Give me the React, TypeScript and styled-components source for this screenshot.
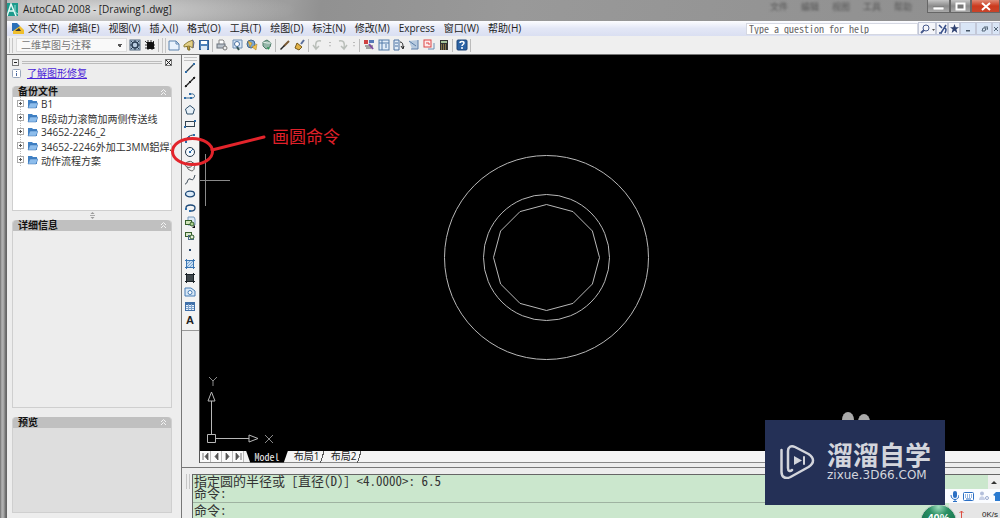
import React from "react";
import styled, { createGlobalStyle, css } from "styled-components";

const ui = `"Open Sans", "Noto Sans CJK SC", sans-serif`;
const mono = `"Noto Sans Mono CJK SC", "Liberation Mono", "Noto Sans CJK SC", monospace`;

const GlobalStyle = createGlobalStyle`
  * { box-sizing: border-box; }
  html, body { margin: 0; height: 100%; overflow: hidden; }
  body { font-family: ${ui}; font-size: 10px; color: #222; background: #ededed; }
  button { font: inherit; color: inherit; padding: 0; border: 0; background: none; }
  svg { display: block; flex: none; }
`;

const Window = styled.div`
  position: relative;
  display: flex;
  height: 100vh;
  overflow: hidden;
`;

const FrameEdge = styled.div`
  flex: 0 0 7px;
  background: linear-gradient(90deg, #6f6f6f 0, #b4b4b4 2px, #a2a2a2 4px, #777 5px, #5f5f5f 7px);
`;

const Main = styled.div`
  flex: 1;
  min-width: 0;
  display: flex;
  flex-direction: column;
`;

const TitleBar = styled.header`
  display: flex;
  align-items: flex-start;
  height: 21px;
  background:
    radial-gradient(ellipse 200px 24px at 90px 10px, rgba(225, 225, 225, 0.85), rgba(200, 200, 200, 0) 100%),
    linear-gradient(100deg, #a3a3a3 0, #9d9d9d 280px, #919191 310px, #999 500px, #8f8f8f 100%);
`;

const Title = styled.h1`
  display: flex;
  align-items: center;
  gap: 5px;
  margin: 0;
  height: 18px;
  font-size: 10px;
  font-weight: 400;
  line-height: 18px;
  color: #1c1c1c;
`;

const Ghosts = styled.div`
  display: flex;
  gap: 13px;
  margin-left: auto;
  margin-right: 15px;
  font-size: 9px;
  line-height: 13px;
  color: #555;
  filter: blur(1px);
`;

const WinButton = styled.button<{ $close?: boolean; $w: number }>`
  display: flex;
  align-items: center;
  justify-content: center;
  width: ${(p) => p.$w}px;
  height: 13px;
  border: 1px solid #666;
  border-top: 0;
  background: ${(p) =>
    p.$close ? "linear-gradient(#dd8a76, #cc3a1e 50%, #c8442a)" : "linear-gradient(#c4c4c4, #8c8c8c 50%, #a9a9a9)"};
`;

const MenuBar = styled.nav`
  display: flex;
  align-items: center;
  gap: 9px;
  height: 15px;
  padding-left: 4px;
  background: linear-gradient(#fdfdff, #e3e7f6 50%, #dadff2);
`;

const AppMark = styled.svg`
  margin-right: -6px;
`;

const MenuItem = styled.button`
  line-height: 15px;
  white-space: nowrap;
`;

const Help = styled.div`
  display: flex;
  align-items: center;
  margin-left: auto;
  height: 13px;
`;

const HelpInput = styled.input`
  width: 172px;
  height: 12px;
  padding: 0 2px;
  border: 1px solid #d5d8e2;
  font: 10px/10px ${mono};
  color: #555;
  background: #fff;
  &::placeholder { color: #666; opacity: 1; }
`;

const HelpButton = styled.button<{ $w: number; $pane?: boolean }>`
  display: flex;
  align-items: center;
  justify-content: center;
  width: ${(p) => p.$w}px;
  height: 13px;
  border: 1px solid #c3c8d8;
  background: ${(p) => (p.$pane ? "#d9e5f6" : "#f4f5fa")};
`;

const ToolBar = styled.div`
  display: flex;
  align-items: center;
  height: 19px;
  padding-left: 2px;
  background: #efefef;
  border-bottom: 1px solid #777;
`;

const Grip = styled.i<{ $across?: boolean }>`
  flex: none;
  ${(p) =>
    p.$across
      ? css`height: 4px; margin: 2px 2px 0; border: solid #c2c2c2; border-width: 1px 0;`
      : css`width: 4px; height: 15px; border: solid #c6c6c6; border-width: 0 1px;`}
`;

const Workspace = styled.select`
  appearance: none;
  width: 111px;
  height: 14px;
  margin: 0 0 0 3px;
  padding: 0 4px;
  border: 1px solid #dcdcdc;
  font: 10px/12px ${ui};
  color: #777;
  background:
    linear-gradient(45deg, transparent 50%, #555 50%) right 6px center / 3px 3px no-repeat,
    linear-gradient(315deg, transparent 50%, #555 50%) right 3px center / 3px 3px no-repeat,
    #f9f9f9;
`;

const ToolButton = styled.button<{ $w?: number }>`
  display: flex;
  align-items: center;
  justify-content: center;
  flex: none;
  width: ${(p) => p.$w ?? 15}px;
  height: 14px;
`;

const LetterA = styled.span`
  font: 700 11px/14px "Liberation Sans", sans-serif;
  color: #222;
`;

const Separator = styled.i`
  flex: none;
  width: 1px;
  height: 13px;
  margin: 0 1px;
  background: #bbb;
`;

const Standard = styled.div`
  display: flex;
  align-items: center;
  margin-left: 2px;
`;

const Body = styled.div`
  flex: 1;
  min-height: 0;
  display: flex;
`;

const Palette = styled.aside`
  flex: 0 0 175px;
  min-width: 0;
  display: flex;
  flex-direction: column;
  padding: 2px 9px 5px 5px;
  border-right: 1px solid #777;
  background: #ededed;
`;

const PaletteTop = styled.div`
  display: flex;
  align-items: center;
  gap: 3px;
  height: 10px;
`;

const PaletteRule = styled.i`
  flex: 1;
  height: 3px;
  border: solid #bcbcbc;
  border-width: 1px 0;
`;

const SmallBox = styled.button`
  display: flex;
  align-items: center;
  justify-content: center;
  width: 7px;
  height: 7px;
  border: 1px solid #777;
  background: #f4f4f4;
`;

const LearnRow = styled.div`
  display: flex;
  align-items: center;
  gap: 6px;
  height: 13px;
  margin-bottom: 6px;
  a { color: #4a24d8; font-size: 10px; line-height: 13px; }
`;

const Group = styled.section<{ $grow: number; $shade?: boolean }>`
  flex: ${(p) => p.$grow} 1 0;
  min-height: 0;
  display: flex;
  flex-direction: column;
  border: 1px solid #cfcfcf;
  border-top: 0;
  border-radius: 4px 4px 0 0;
  background: ${(p) => (p.$shade ? "#dedede" : "#ededed")};
`;

const GroupHead = styled.h2`
  display: flex;
  align-items: center;
  justify-content: space-between;
  flex: none;
  height: 11px;
  margin: 0;
  padding: 0 4px 0 5px;
  border-radius: 4px 4px 0 0;
  font-size: 10px;
  font-weight: 700;
  line-height: 11px;
  color: #111;
  background: #c0c0c0;
`;

const Tree = styled.ul`
  flex: 1;
  margin: 0;
  padding: 0 0 0 4px;
  list-style: none;
  overflow: hidden;
  background: #fff;
`;

const TreeItem = styled.li`
  display: flex;
  align-items: center;
  gap: 3px;
  height: 14px;
  white-space: nowrap;
  color: #333;
`;

const Splitter = styled.div`
  flex: none;
  display: flex;
  align-items: center;
  justify-content: center;
  height: 9px;
`;

const Right = styled.div`
  flex: 1;
  min-width: 0;
  display: flex;
  flex-direction: column;
`;

const Upper = styled.div`
  flex: 1;
  min-height: 0;
  display: flex;
`;

const DrawBar = styled.div`
  flex: 0 0 17px;
  align-self: flex-start;
  display: flex;
  flex-direction: column;
  padding-bottom: 3px;
  border-bottom: 1px solid #999;
  background: #f3f3f3;
`;

const View = styled.main`
  flex: 1;
  min-width: 0;
  display: flex;
  flex-direction: column;
  border-left: 1px solid #555;
`;

const Canvas = styled.svg`
  flex: 1;
  width: 100%;
  min-height: 0;
  background: #000;
`;

const Tabs = styled.div`
  display: flex;
  align-items: center;
  height: 12px;
  background: #f4f4f4;
  border-bottom: 1px solid #888;
`;

const NavButton = styled.button`
  display: flex;
  align-items: center;
  justify-content: center;
  width: 11px;
  height: 11px;
  border-right: 1px solid #bbb;
  background: #fafafa;
`;

const Tab = styled.button<{ $active?: boolean }>`
  height: 12px;
  line-height: 11px;
  ${(p) =>
    p.$active
      ? css`width: 42px; margin-left: 2px; font-family: ${mono}; color: #eee; background: #000; clip-path: polygon(0 0, 100% 0, 90% 100%, 10% 100%);`
      : css`width: 37px; background: linear-gradient(107deg, transparent 34px, #555 34px, #555 35px, transparent 35px);`}
`;

const Command = styled.section`
  flex: none;
  display: flex;
  height: 51px;
  margin-top: 4px;
  padding: 6px 0 0 4px;
  border-top: 1px solid #777;
  background: #ededed;
`;

const CommandBox = styled.div`
  flex: 1;
  display: flex;
  flex-direction: column;
  margin-left: 2px;
  border: solid #666;
  border-width: 1px 0 0 1px;
  background: #cbe7cd;
  font: 13px/12px ${mono};
  color: #333;
`;

const Log = styled.div`
  display: flex;
  justify-content: space-between;
  flex: none;
  height: 28px;
  padding-left: 1px;
  border-bottom: 1px solid #9fb3a1;
  p { margin: 0; white-space: pre; }
`;

const ScrollUp = styled.button`
  display: flex;
  align-items: center;
  justify-content: center;
  width: 12px;
  height: 14px;
  background: #eee;
`;

const Prompt = styled.label`
  display: flex;
  padding-left: 1px;
  line-height: 14px;
  input { flex: 1; min-width: 0; border: 0; padding: 0; height: 13px; background: transparent; font: inherit; outline: 0; }
`;

const Notes = styled.svg`
  position: absolute;
  inset: 0;
  width: 100%;
  height: 100%;
  pointer-events: none;
`;

const Watermark = styled.div`
  position: absolute;
  right: 55px;
  bottom: 13px;
  display: flex;
  align-items: center;
  gap: 12px;
  width: 180px;
  height: 85px;
  padding: 0 0 4px 14px;
  color: #d3d5dc;
  background: #243056;
  strong { display: block; font: 700 26px/28px "Noto Sans CJK SC", sans-serif; }
  span { display: block; font: 12px/14px "DejaVu Sans", sans-serif; }
`;

const Tray = styled.div`
  position: absolute;
  right: 0;
  bottom: 0;
  width: 81px;
  height: 29px;
`;

const ImeBar = styled.div`
  display: flex;
  align-items: center;
  justify-content: flex-end;
  gap: 4px;
  height: 14px;
  margin-left: 26px;
  background: #fafcff;
`;

const Meter = styled.div`
  display: flex;
  align-items: flex-start;
  justify-content: flex-end;
  gap: 18px;
  height: 15px;
  margin-left: 30px;
  padding: 7px 2px 0 0;
  font: 8px/10px "Liberation Sans", sans-serif;
  background: #e6e6e6;
`;

const Ball = styled.div`
  position: absolute;
  left: 1px;
  top: 15px;
  width: 37px;
  height: 37px;
  padding-top: 7px;
  border: 1px solid #c7cfc9;
  border-radius: 50%;
  font: 700 11px/12px "Liberation Sans", sans-serif;
  text-align: center;
  color: #fff;
  background: radial-gradient(circle at 50% 5%, #9fdcbc 0, #2c9165 25%, #12704a 65%);
`;

const icons: Record<string, React.ReactNode> = {
  gear: <><rect x="1" y="1" width="10" height="10" fill="#b8cbe0" stroke="#53687f" /><circle cx="6" cy="6" r="3" fill="none" stroke="#2c3f55" strokeWidth="1.5" /><path d="M6 1v2M6 9v2M1 6h2M9 6h2M2 2l2 2M8 8l2 2M10 2L8 4M4 8l-2 2" stroke="#2c3f55" /></>,
  chip: <><rect x="3" y="3" width="7" height="7" fill="#111" /><path d="M1 2l2 2M4 1v2M7 1v2M10 2L8 4M1 6h2M1 9h2M10 6h1M10 9h1M4 10v1M8 10v1" stroke="#333" /></>,
  newdoc: <><path d="M1 2h7l3 3v6H1z" fill="#e9f2fc" stroke="#5d83ae" /><path d="M8 2v3h3" fill="none" stroke="#5d83ae" /></>,
  open: <><path d="M1 6l4-3 5-2v8l-4-2-5 1z" fill="#e3cf86" stroke="#8f8038" /><path d="M4 7l1 4h2l-1-4" fill="#c9a43e" stroke="#7a6a2c" /><path d="M9 1l2 2-1 6" fill="none" stroke="#668" /></>,
  save: <><rect x="1.5" y="1.5" width="9" height="9" fill="#4d80b9" stroke="#2f5e96" /><rect x="3" y="2" width="6" height="3" fill="#fff" /><rect x="3" y="7" width="6" height="4" fill="#dce8f4" /></>,
  print: <><path d="M3 5V1h4l1 1v3" fill="#fff" stroke="#888" /><rect x="1" y="5" width="8" height="4" fill="#b9c0c8" stroke="#6a727c" /><circle cx="9" cy="9" r="2" fill="#eee" stroke="#777" /></>,
  preview: <><path d="M2 1h9v8H2z" fill="#d7e6f6" stroke="#6c8db3" /><circle cx="6" cy="5" r="2.5" fill="#fff" stroke="#4971a2" /><path d="M6 8l2 3" stroke="#355" strokeWidth="2" /></>,
  publish: <><circle cx="5" cy="5" r="4" fill="#7aa6d2" stroke="#41668d" /><path d="M2 2l4 2-2 4zM6 8l5-3-1 6z" fill="#f0c24d" stroke="#a77d1f" strokeWidth=".5" /></>,
  etransmit: <><path d="M2 3l4-2 4 3-1 4-4 2-3-3z" fill="#95b7a9" stroke="#4c7b67" /><path d="M2 3l4 1 4 0" stroke="#e6f2ec" fill="none" /><path d="M6 8l1 3 2-2" fill="#2f9b58" /></>,
  brush: <><path d="M10 2L5 7" stroke="#7a5a35" strokeWidth="2" /><path d="M5 6l1 1-4 4-1-1z" fill="#222" /></>,
  match: <><path d="M10 1L7 5" stroke="#5a6e9c" strokeWidth="2" /><path d="M3 4l5 4-3 3-4-2z" fill="#e2b246" stroke="#795b1b" /></>,
  undo: <path d="M9 2C4 1 3 4 4 9M1 6l3 4 3-3" fill="none" stroke="#b9beb9" strokeWidth="1.5" />,
  redo: <path d="M3 2c5-1 6 2 5 7M11 6l-3 4-3-3" fill="none" stroke="#b9beb9" strokeWidth="1.5" />,
  more: <path d="M5 3h2v1H5zM5 6h2l-1 2z" fill="#bbb" />,
  props: <><rect x="1" y="1" width="4" height="4" fill="#cf4141" /><rect x="6" y="1" width="5" height="3" fill="#5578b8" /><path d="M2 7h8M3 9h5" stroke="#555" /><path d="M6 5l4 5" stroke="#7e4ba0" strokeWidth="2" /></>,
  center: <><rect x="1" y="1" width="10" height="10" fill="#e2edf8" stroke="#527ba8" /><path d="M1 4h10M4 1v10M7 6h2M7 8h2" stroke="#527ba8" /></>,
  palettes: <><path d="M1 1h5v10H1z" fill="#e2edf8" stroke="#4b71a0" /><path d="M2 4h3M2 7h3" stroke="#4b71a0" /><path d="M7 3c3 0 3 3 3 6M8 7l2 3 1-3" fill="none" stroke="#222" /></>,
  sheets: <><path d="M1 2l9-1v9H4z" fill="#b7cadf" /><path d="M1 2l7 5M10 1v9H3" fill="none" stroke="#5c7fa8" /></>,
  markup: <><rect x="1" y="1" width="7" height="7" fill="#fdeaea" stroke="#d44" /><path d="M3 4h3v2" stroke="#d44" fill="none" /><path d="M5 10h6V4" fill="none" stroke="#6c8db3" /></>,
  calc: <><rect x="2" y="1" width="8" height="10" fill="#333" /><rect x="3" y="2" width="6" height="2" fill="#a7c39b" /><path d="M3 6h6M3 8h6M3 10h6" stroke="#d9b65e" strokeDasharray="1 1" /></>,
  help: <><rect x="1" y="1" width="10" height="10" rx="1" fill="#2c63a5" stroke="#1d4478" /><path d="M4 4c0-2 4-2 4 0 0 1.5-2 1.5-2 3M6 8v2" fill="none" stroke="#fff" strokeWidth="1.5" /></>,
  line: <><path d="M2 10L10 2" stroke="#33424f" strokeWidth="1.3" /><path d="M1 9h2v2H1zM9 1h2v2H9z" fill="#2d6ca8" /></>,
  xline: <><path d="M1 11L11 1" stroke="#222" strokeWidth="1.3" /><path d="M1 9h2v2H1zM5 5h2v2H5zM9 1h2v2H9z" fill="#222" /></>,
  pline: <><path d="M1 8h7c4 0 3-5-1-4" fill="none" stroke="#33658f" /><path d="M0 7h2v2H0zM6 7h2v2H6zM5 3h2v2H5z" fill="#2d6ca8" /></>,
  polygon: <path d="M6 1.5l4.500 3.500L9 10H3L1.500 5z" fill="#e8f1f8" stroke="#31506b" />,
  rect: <><rect x="1.5" y="3.5" width="9" height="5" fill="none" stroke="#33424f" /><path d="M0 8h2v2H0zM10 2h2v2h-2z" fill="#2d6ca8" /></>,
  arc: <><path d="M2 10c0-4 3-7 8-7" fill="none" stroke="#33424f" /><path d="M1 9h2v2H1zM4 4h2v2H4zM9 2h2v2H9z" fill="#2d6ca8" /></>,
  circle: <><circle cx="6" cy="6" r="4.5" fill="#f6fbff" stroke="#273a4b" /><path d="M6 6l3-3" stroke="#2d6ca8" /><path d="M5 5h2v2H5z" fill="#2d6ca8" /></>,
  cloud: <path d="M3 7C0 6 1 2 4 2c1-1 4-1 5 1 2 0 3 3 1 4 1 3-2 5-4 3-1 0-3-1-2-3M3 7c2 1 5 0 5-2" fill="none" stroke="#555" />,
  spline: <path d="M1 10c3 0 2-6 5-5s3 2 5-4" fill="none" stroke="#33424f" />,
  ellipse: <ellipse cx="6" cy="6" rx="4.500" ry="2.800" fill="#dcebf8" stroke="#1f4a78" strokeWidth="1.3" />,
  earc: <><path d="M2 6c0-4 9-4 9 0 0 2-2 3-4 3" fill="none" stroke="#1f4a78" strokeWidth="1.3" /><path d="M1 6h2v2H1zM5 8h2v2H5z" fill="#2d6ca8" /></>,
  insert: <><path d="M4 1h6l1 2v6H4z" fill="#dbe8f5" stroke="#7799bb" /><rect x="1.5" y="4.5" width="6" height="4" fill="#cfe3b8" stroke="#355f2a" /><circle cx="8" cy="8" r="2" fill="#a8cf8d" stroke="#355f2a" /><path d="M11 9v3H8z" fill="#111" /></>,
  block: <><rect x="1.5" y="2.5" width="6" height="4" fill="#d9e8c7" stroke="#355f2a" /><rect x="4.500" y="5.500" width="5" height="4" fill="none" stroke="#4a6c8b" /><circle cx="8" cy="7" r="2" fill="#e7f0da" stroke="#355f2a" /></>,
  point: <rect x="5" y="5" width="2" height="2" fill="#27466a" />,
  hatch: <><rect x="2.5" y="2.5" width="7" height="7" fill="#c9def3" /><path d="M2.5 1v10M9.5 1v10M1 2.5h10M1 9.5h10" stroke="#3a76b4" /><path d="M3 9l6-6M3 6l3-3M6 9l3-3" stroke="#7aa6d2" /></>,
  gradient: <><rect x="2" y="2" width="8" height="8" fill="#3f474b" /><path d="M2.5 1v10M9.5 1v10M1 2.5h10M1 9.5h10" stroke="#1c2328" /></>,
  region: <><path d="M1 2h6l4 3v5H1z" fill="#d8e7f6" stroke="#467db5" /><circle cx="6" cy="6.500" r="2" fill="#fff" stroke="#467db5" /></>,
  table: <><rect x="1.5" y="2.5" width="9" height="8" fill="#e8f1fb" stroke="#3f6fa8" /><path d="M1 4h10" stroke="#3f6fa8" strokeWidth="2" /><path d="M2 6.5h8M2 8.5h8M4.5 4v6M7.5 4v6" stroke="#7fa3cd" /></>,
};

const Icon = ({ name }: { name: string }) => (
  <svg width="12" height="12" viewBox="0 0 12 12" fill="none" aria-hidden="true">{icons[name]}</svg>
);

const menus = ["文件(F)", "编辑(E)", "视图(V)", "插入(I)", "格式(O)", "工具(T)", "绘图(D)", "标注(N)", "修改(M)", "Express", "窗口(W)", "帮助(H)"];
const standard = [
  ["newdoc", "open", "save"],
  ["print", "preview", "publish", "etransmit"],
  ["brush", "match"],
  ["undo", "more", "redo", "more"],
  ["props", "center", "palettes", "sheets", "markup", "calc"],
  ["help"],
];
const drawTools = ["line", "xline", "pline", "polygon", "rect", "arc", "circle", "cloud", "spline", "ellipse", "earc", "insert", "block", "point", "hatch", "gradient", "region", "table"];
const backups = ["B1", "B段动力滚筒加两侧传送线", "34652-2246_2", "34652-2246外加工3MM鋁焊2", "动作流程方案"];

const dodecagon = Array.from({ length: 12 }, (_, i) => {
  const a = (i * Math.PI) / 6;
  return `${(346.5 + 53 * Math.cos(a)).toFixed(1)},${(202.5 + 53 * Math.sin(a)).toFixed(1)}`;
}).join(" ");

const Chevrons = () => (
  <svg width="7" height="8" viewBox="0 0 7 8" fill="none" stroke="#f4f4f4"><path d="M1 4l2.5-2.5L6 4M1 7l2.5-2.5L6 7" /></svg>
);

const navShapes = ["M2 1v7M7 1L4 4.5 7 8z", "M6 1L3 4.5 6 8z", "M3 1l3 3.5L3 8z", "M2 1l3 3.5L2 8zM7 1v7"];

export default function App() {
  return (
    <Window>
      <GlobalStyle />
      <FrameEdge />
      <Main>
        <TitleBar>
          <Title>
            <svg width="11" height="13" viewBox="0 0 11 13"><rect width="11" height="13" fill="#1c9a8c" /><path d="M0 13L4 1l5 12M2 8h5" fill="none" stroke="#e4fbf6" strokeWidth="1.5" /><path d="M8 2v7l3 2" fill="none" stroke="#9be0d6" /></svg>
            AutoCAD 2008 - [Drawing1.dwg]
          </Title>
          <Ghosts aria-hidden="true"><span>文件</span><span>编辑</span><span>视图</span><span>工具</span><span>帮助</span></Ghosts>
          <WinButton $w={23} aria-label="Minimize"><svg width="11" height="8"><path d="M0 5h11v3H0z" fill="#fff" stroke="#555" strokeWidth=".5" /></svg></WinButton>
          <WinButton $w={21} aria-label="Restore"><svg width="11" height="9"><rect x="1.5" y="1.5" width="8" height="6" fill="#777" stroke="#fff" strokeWidth="2" /></svg></WinButton>
          <WinButton $w={29} $close aria-label="Close"><svg width="10" height="9"><path d="M1 1l8 7M9 1L1 8" stroke="#fff" strokeWidth="2" /></svg></WinButton>
        </TitleBar>

        <MenuBar>
          <AppMark width="14" height="13" viewBox="0 0 14 13"><path d="M1 1h5l3 3v5H1z" fill="#2a6fb8" /><path d="M2 9l7-5 4 4v4H2z" fill="#f0bf2f" /><path d="M4 9l4-3 2 3z" fill="#333" /></AppMark>
          {menus.map((m) => <MenuItem key={m}>{m}</MenuItem>)}
          <Help>
            <HelpInput aria-label="Help search" placeholder="Type a question for help" />
            <HelpButton $w={18} aria-label="Search"><svg width="15" height="10" fill="none"><circle cx="6" cy="4" r="3" stroke="#46598c" /><path d="M4 6L1 9" stroke="#46598c" strokeWidth="2" /><path d="M12 5h3l-1.5 2z" fill="#555" /></svg></HelpButton>
            <HelpButton $w={12} aria-label="Communication"><svg width="9" height="10" fill="none" stroke="#39508a"><path d="M1 1l3 3M8 1L3 9M6 4c3 0 2 3 1 5M1 9h3" strokeWidth="1.5" /></svg></HelpButton>
            <HelpButton $w={12} aria-label="Favorites"><svg width="9" height="9"><path d="M4.5 0l1.2 3.2H9L6.4 5.3 7.3 9 4.5 6.8 1.7 9l.9-3.7L0 3.2h3.3z" fill="#2f4170" /></svg></HelpButton>
            <HelpButton $w={16} $pane aria-label="Minimize drawing"><svg width="6" height="6"><path d="M1 4h4v1.5H1z" fill="#456" /></svg></HelpButton>
            <HelpButton $w={16} $pane aria-label="Restore drawing"><svg width="7" height="6" fill="none"><path d="M1 5l1-3h3l-1 3zM3 1h4L6 4" stroke="#567" /></svg></HelpButton>
            <HelpButton $w={8} $pane aria-label="Close drawing"><svg width="4" height="6"><path d="M0 1l4 4M4 1L0 5" stroke="#567" /></svg></HelpButton>
          </Help>
        </MenuBar>

        <ToolBar>
          <Grip />
          <Workspace aria-label="Workspace"><option>二维草图与注释</option></Workspace>
          <ToolButton aria-label="gear"><Icon name="gear" /></ToolButton>
          <ToolButton aria-label="chip"><Icon name="chip" /></ToolButton>
          <Separator />
          <Standard>
            <Grip />
            {standard.map((group, g) => (
              <React.Fragment key={g}>
                {g > 0 && <Separator />}
                {group.map((n, i) => <ToolButton key={n + i} $w={n === "more" ? 9 : 15} aria-label={n}><Icon name={n} /></ToolButton>)}
              </React.Fragment>
            ))}
            <Separator />
          </Standard>
        </ToolBar>

        <Body>
          <Palette>
            <PaletteTop>
              <SmallBox aria-label="Auto-hide"><svg width="3" height="1"><rect width="3" height="1" fill="#222" /></svg></SmallBox>
              <PaletteRule />
              <SmallBox aria-label="Close palette"><svg width="5" height="5"><path d="M0 0l5 5M5 0L0 5" stroke="#222" /></svg></SmallBox>
            </PaletteTop>
            <LearnRow>
              <svg width="9" height="10"><rect x=".5" y=".5" width="8" height="8" rx="1" fill="#fff" stroke="#9aa7bb" /><path d="M4.5 2v1M4.5 4v3" stroke="#4a68a0" /></svg>
              <a href="#repair">了解图形修复</a>
            </LearnRow>
            <Group $grow={125}>
              <GroupHead>备份文件 <Chevrons /></GroupHead>
              <Tree>
                {backups.map((b) => (
                  <TreeItem key={b}>
                    <svg width="7" height="14" fill="none"><path d="M3.5 0v14" stroke="#bbb" strokeDasharray="1 1" /><rect x=".5" y="3.5" width="6" height="6" fill="#fff" stroke="#aaa" /><path d="M2 6.5h3M3.5 5v3" stroke="#555" /></svg>
                    <svg width="11" height="10" viewBox="0 0 11 10"><path d="M1 1h4l1 1h4v7H1z" fill="#3f80c4" /><path d="M3 4h8L9 9H1z" fill="#8dbdec" stroke="#3a73b3" strokeWidth=".5" /></svg>
                    {b}
                  </TreeItem>
                ))}
              </Tree>
            </Group>
            <Splitter><svg width="5" height="7"><path d="M2.5 0l2 2h-4zM2.5 7l2-2h-4z" fill="#999" /><path d="M0 3.5h5" stroke="#aaa" /></svg></Splitter>
            <Group $grow={189}><GroupHead>详细信息 <Chevrons /></GroupHead></Group>
            <Splitter />
            <Group $grow={96} $shade><GroupHead>预览 <Chevrons /></GroupHead></Group>
          </Palette>

          <Right>
            <Upper>
              <DrawBar>
                <Grip $across />
                {drawTools.map((n) => <ToolButton key={n} $w={16} aria-label={n}><Icon name={n} /></ToolButton>)}
                <ToolButton $w={16} aria-label="Text"><LetterA>A</LetterA></ToolButton>
              </DrawBar>
              <View>
                <Canvas fill="none" stroke="#b8b8b8">
                  <circle cx="346.5" cy="202.5" r="102" />
                  <circle cx="346.5" cy="202.5" r="63" />
                  <polygon points={dodecagon} />
                  <path d="M5.5 99v52M0 125.5h30" stroke="#8a8a8a" />
                  <path d="M7.5 379.5h8v8h-8zM11.5 379v-33M8 346h7l-3.5-9zM16 383.5h33M49 380v7l9-3.5z" />
                  <path d="M9 322l4 4 4-4M13 326v5M65 380l8 8M73 380l-8 8" stroke="#8a8a8a" />
                  <g fill="#a9a9a9" stroke="none"><ellipse cx="648" cy="365" rx="6" ry="8" /><ellipse cx="664" cy="367" rx="6" ry="8" /></g>
                </Canvas>
                <Tabs>
                  {navShapes.map((d) => <NavButton key={d} aria-label="Scroll tabs"><svg width="9" height="9"><path d={d} fill="#555" stroke="#555" strokeWidth=".8" /></svg></NavButton>)}
                  <Tab $active>Model</Tab>
                  <Tab>布局1</Tab>
                  <Tab>布局2</Tab>
                </Tabs>
              </View>
            </Upper>
            <Command>
              <Grip />
              <CommandBox>
                <Log>
                  <div>
                    <p>指定圆的半径或 [直径(D)] &lt;4.0000&gt;: 6.5</p>
                    <p>命令:</p>
                  </div>
                  <ScrollUp aria-label="Scroll up"><svg width="6" height="4"><path d="M0 4l3-3 3 3z" fill="#333" /></svg></ScrollUp>
                </Log>
                <Prompt>命令:<input aria-label="命令" /></Prompt>
              </CommandBox>
            </Command>
          </Right>
        </Body>
      </Main>

      <Notes fill="none">
        <ellipse cx="192.5" cy="151.5" rx="20" ry="13" stroke="#e3242b" strokeWidth="3" />
        <path d="M212 150L264 137" stroke="#e3242b" strokeWidth="3" strokeLinecap="round" />
        <text x="272" y="143" fill="#e0202a" fontSize="17" fontFamily={ui}>画圆命令</text>
      </Notes>

      <Tray>
        <ImeBar>
          <svg width="9" height="11" fill="none"><rect x="3" y="0" width="4" height="7" rx="2" fill="#2a6fc4" /><path d="M1 4c0 6 8 6 8 0M5 8v3M3 10.5h4" stroke="#2a6fc4" /></svg>
          <svg width="11" height="9"><rect x=".5" y=".5" width="10" height="8" rx="1" fill="#fff" stroke="#2a6fc4" /><path d="M2 3h7M2 5h7" stroke="#2a6fc4" strokeDasharray="1 1" /><path d="M3 7h5" stroke="#2a6fc4" /></svg>
          <svg width="11" height="10"><circle cx="4" cy="2.5" r="2" fill="#b3bfdb" /><path d="M1 9c0-5 6-5 6 0z" fill="#c7d0e6" /><circle cx="9" cy="7" r="1.5" fill="none" stroke="#99a9cf" /></svg>
          <svg width="7" height="9"><path d="M0 3l3-3h4v9H2V4z" fill="#2a7ad0" /></svg>
        </ImeBar>
        <Meter><svg width="5" height="8"><path d="M2.5 1v7M.5 3l2-2 2 2" fill="none" stroke="#dd5144" /></svg>0K/s</Meter>
        <Ball>40%</Ball>
      </Tray>

      <Watermark>
        <svg width="36" height="36" viewBox="0 0 36 36" fill="none" stroke="#d3d5dc" strokeWidth="2.5" strokeLinecap="round" strokeLinejoin="round">
          <path d="M2.500 7v22c0 6 5 7 9 5l18-10c6-4 6-9 0-13L16 4c-4-2-7 0-7 4v17c0 3 2 4 4 2" />
          <path d="M15 13l8 4.500-8 4.500z" fill="#d3d5dc" stroke="none" /><path d="M25 14v7" strokeWidth="2" />
        </svg>
        <div><strong>溜溜自学</strong><span>zixue.3D66.COM</span></div>
      </Watermark>
    </Window>
  );
}
